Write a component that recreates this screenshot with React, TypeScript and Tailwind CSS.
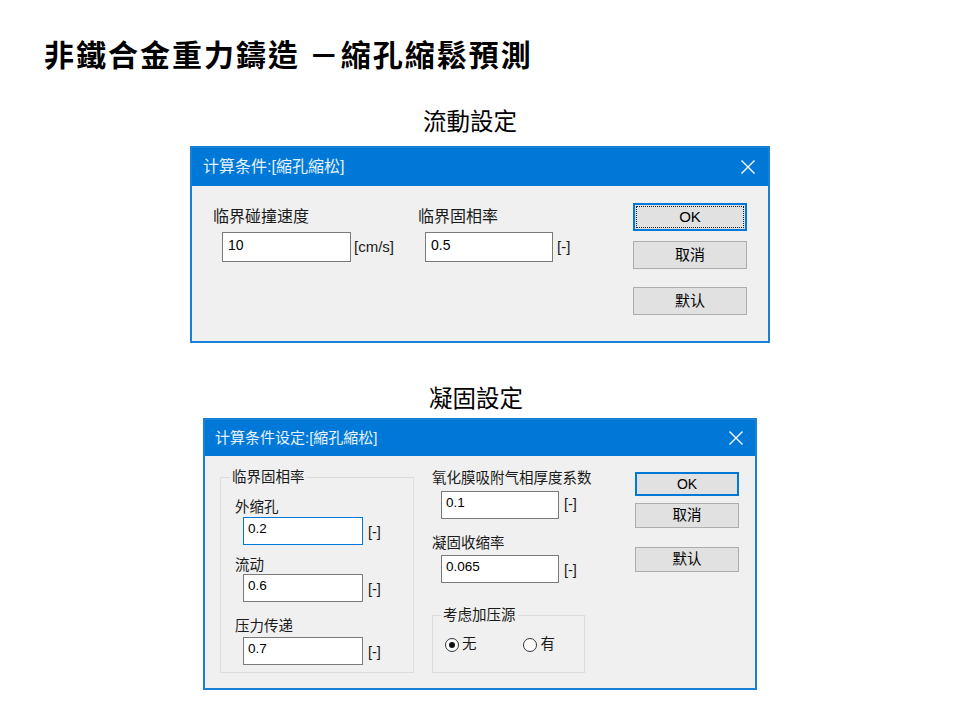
import React from "react";

const dlgFont = "font-['Liberation_Sans','Noto_Sans_CJK_SC',sans-serif]";

function CloseX() {
  return (
    <svg width="16" height="16" viewBox="0 0 16 16" className="shrink-0">
      <path d="M1.5 1.5 L14.5 14.5 M14.5 1.5 L1.5 14.5" stroke="white" strokeWidth="1.4" fill="none" />
    </svg>
  );
}

function Radio({ checked }: { checked?: boolean }) {
  return (
    <span className="w-[14px] h-[14px] rounded-full border-[1.5px] border-[#333] bg-white flex items-center justify-center shrink-0">
      {checked ? <span className="w-[6px] h-[6px] rounded-full bg-[#111]" /> : null}
    </span>
  );
}

export default function App() {
  return (
    <div className="w-[960px] h-[720px] bg-white flex flex-col overflow-hidden">
      <div className="ml-[44px] mt-[35px] h-[36px] leading-[36px] text-[30px] font-bold tracking-[2px] text-black font-['Noto_Sans_CJK_TC',sans-serif]">
        非鐵合金重力鑄造 －縮孔縮鬆預測
      </div>

      <div className="ml-[423px] mt-[34px] h-[30px] leading-[30px] text-[23.5px] text-black font-['Noto_Sans_CJK_TC',sans-serif]">
        流動設定
      </div>

      {/* Dialog 1 */}
      <div className={`ml-[190px] mt-[11px] w-[580px] h-[197px] border-2 border-[#1a7fd6] bg-[#f0f0f0] flex flex-col ${dlgFont}`}>
        <div className="h-[38px] bg-[#0078d7] flex items-center justify-between pl-[11px] pr-[12px]">
          <span className="text-[16px] text-white/90">计算条件:[縮孔縮松]</span>
          <CloseX />
        </div>
        <div className="flex items-start pl-[21px] pt-[17px] text-[#1a1a1a]">
          <div className="w-[205px] mt-[4px] flex flex-col">
            <span className="text-[16px] leading-[20px]">临界碰撞速度</span>
            <div className="ml-[9px] mt-[5px] flex items-center gap-[3px]">
              <div className="w-[129px] h-[30px] bg-white border border-[#7a7a7a] px-[5px] pt-[3px] text-[14px] leading-[18px] text-black">10</div>
              <span className="text-[15px]">[cm/s]</span>
            </div>
          </div>
          <div className="w-[215px] mt-[4px] flex flex-col">
            <span className="text-[16px] leading-[20px]">临界固相率</span>
            <div className="ml-[7px] mt-[5px] flex items-center gap-[4px]">
              <div className="w-[128px] h-[30px] bg-white border border-[#7a7a7a] px-[5px] pt-[3px] text-[14px] leading-[18px] text-black">0.5</div>
              <span className="text-[15px]">[-]</span>
            </div>
          </div>
          <div className="w-[114px] flex flex-col">
            <div className="h-[28px] bg-[#e1e1e1] border-2 border-[#0078d7] p-[1px]">
              <div className="w-full h-full border border-dotted border-[#222] flex items-center justify-center text-[15px] text-black">OK</div>
            </div>
            <div className="mt-[10px] h-[28px] bg-[#e1e1e1] border border-[#adadad] flex items-center justify-center text-[15px] text-black">取消</div>
            <div className="mt-[18px] h-[28px] bg-[#e1e1e1] border border-[#adadad] flex items-center justify-center text-[15px] text-black">默认</div>
          </div>
        </div>
      </div>

      <div className="ml-[429px] mt-[39px] h-[30px] leading-[30px] text-[23.5px] text-black font-['Noto_Sans_CJK_TC',sans-serif]">
        凝固設定
      </div>

      {/* Dialog 2 */}
      <div className={`ml-[203px] mt-[6px] w-[554px] h-[272px] border-2 border-[#1a7fd6] bg-[#f0f0f0] flex flex-col ${dlgFont}`}>
        <div className="h-[36px] bg-[#0078d7] flex items-center justify-between pl-[10px] pr-[11px]">
          <span className="text-[15px] text-white/90">计算条件设定:[縮孔縮松]</span>
          <CloseX />
        </div>
        <div className="flex items-start pt-[12px] text-[#1a1a1a] text-[14.5px]">
          <fieldset className="ml-[15px] w-[194px] h-[205px] border border-[#dcdcdc] flex flex-col">
            <legend className="ml-[9px] px-[2px] leading-[18px]">临界固相率</legend>
            <div className="pl-[14px] flex flex-col">
              <span className="mt-[12px] leading-[18px]">外缩孔</span>
              <div className="ml-[8px] mt-[1px] flex items-center gap-[5px]">
                <div className="w-[120px] h-[28px] bg-white border border-[#0078d7] px-[4px] pt-[2px] text-[13.5px] leading-[18px] text-black">0.2</div>
                <span className="mt-[3px]">[-]</span>
              </div>
              <span className="mt-[11px] leading-[18px]">流动</span>
              <div className="ml-[8px] flex items-center gap-[5px]">
                <div className="w-[120px] h-[28px] bg-white border border-[#7a7a7a] px-[4px] pt-[2px] text-[13.5px] leading-[18px] text-black">0.6</div>
                <span className="mt-[3px]">[-]</span>
              </div>
              <span className="mt-[15px] leading-[18px]">压力传递</span>
              <div className="ml-[8px] mt-[2px] flex items-center gap-[5px]">
                <div className="w-[120px] h-[28px] bg-white border border-[#7a7a7a] px-[4px] pt-[2px] text-[13.5px] leading-[18px] text-black">0.7</div>
                <span className="mt-[3px]">[-]</span>
              </div>
            </div>
          </fieldset>

          <div className="ml-[18px] w-[203px] flex flex-col">
            <span className="mt-[1px] leading-[18px]">氧化膜吸附气相厚度系数</span>
            <div className="ml-[9px] mt-[4px] flex items-center gap-[5px]">
              <div className="w-[118px] h-[28px] bg-white border border-[#7a7a7a] px-[4px] pt-[2px] text-[13.5px] leading-[18px] text-black">0.1</div>
              <span>[-]</span>
            </div>
            <span className="mt-[15px] leading-[18px]">凝固收缩率</span>
            <div className="ml-[9px] mt-[3px] flex items-center gap-[5px]">
              <div className="w-[118px] h-[28px] bg-white border border-[#7a7a7a] px-[4px] pt-[2px] text-[13.5px] leading-[18px] text-black">0.065</div>
              <span className="mt-[4px]">[-]</span>
            </div>
            <fieldset className="mt-[23px] w-[153px] h-[67px] border border-[#dcdcdc] flex flex-col">
              <legend className="ml-[8px] px-[2px] leading-[18px]">考虑加压源</legend>
              <div className="mt-[13px] pl-[12px] flex items-center h-[16px]">
                <Radio checked />
                <span className="ml-[3px]">无</span>
                <span className="ml-[46px]"><Radio /></span>
                <span className="ml-[4px]">有</span>
              </div>
            </fieldset>
          </div>

          <div className="w-[104px] mt-[4px] flex flex-col">
            <div className="h-[24px] bg-[#e1e1e1] border-2 border-[#0078d7] flex items-center justify-center text-[14px] text-black">OK</div>
            <div className="mt-[7px] h-[25px] bg-[#e1e1e1] border border-[#adadad] flex items-center justify-center text-[14.5px] text-black">取消</div>
            <div className="mt-[19px] h-[25px] bg-[#e1e1e1] border border-[#adadad] flex items-center justify-center text-[14.5px] text-black">默认</div>
          </div>
        </div>
      </div>
    </div>
  );
}
